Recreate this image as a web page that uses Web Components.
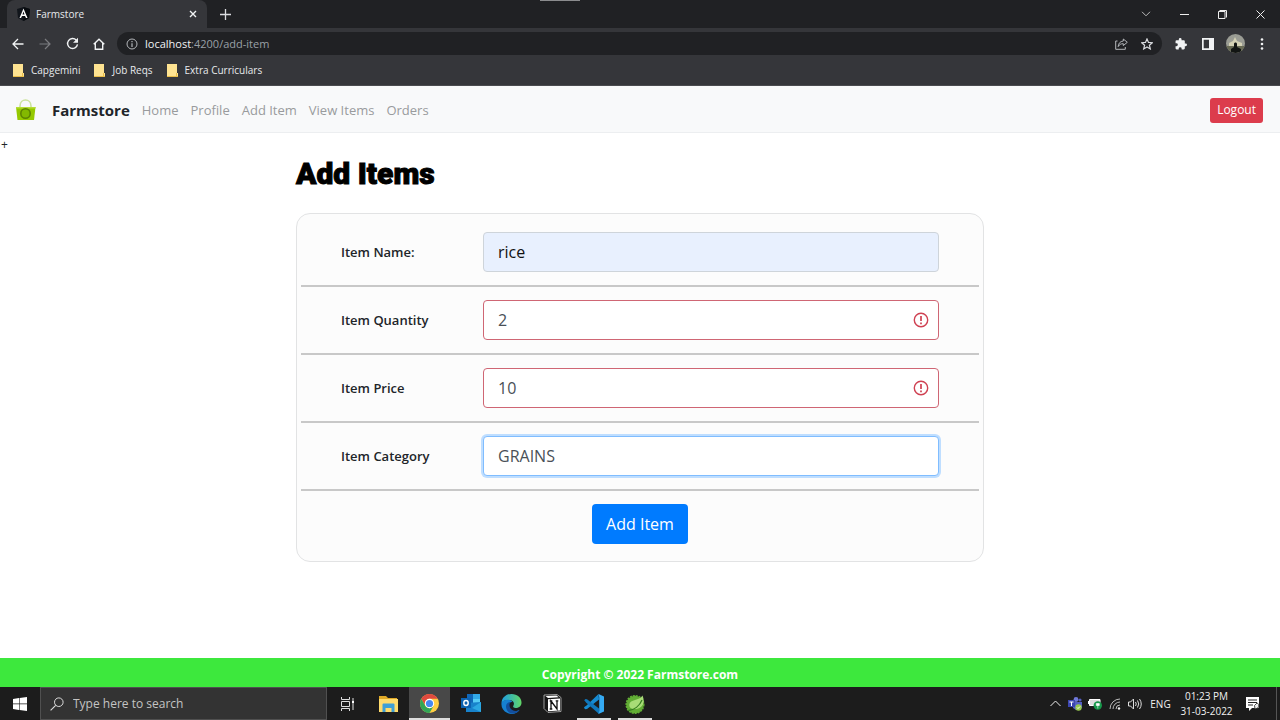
<!DOCTYPE html>
<html lang="en">
<head>
<meta charset="utf-8">
<title>Farmstore</title>
<style>
  html { height: 100%; }
  body { margin: 0; min-height: 100%; display: flex; flex-direction: column; background: #fff; color: #212529; font: 13px/20px "Open Sans", "Noto Sans", sans-serif; }
  store-page { flex: 1; }
</style>
</head>
<body>
<browser-chrome>
  <browser-tab slot="tab">Farmstore</browser-tab>
  <bookmark-link>Capgemini</bookmark-link>
  <bookmark-link>Job Reqs</bookmark-link>
  <bookmark-link>Extra Curriculars</bookmark-link>
</browser-chrome>
<store-page>
  <store-navbar slot="header"></store-navbar>
  <item-form>
    <form-row label="Item Name:" value="rice" state="filled"></form-row>
    <form-row label="Item Quantity" value="2" state="invalid"></form-row>
    <form-row label="Item Price" value="10" state="invalid"></form-row>
    <form-row label="Item Category" value="GRAINS" state="focused"></form-row>
  </item-form>
  <store-footer slot="footer">Copyright © 2022 Farmstore.com</store-footer>
</store-page>
<task-bar></task-bar>

<script>
const base = `
  :host, *, *::before, *::after { box-sizing: border-box; }
  button { font: inherit; color: inherit; background: none; border: 0; margin: 0; padding: 0; display: grid; place-items: center; }
  svg { display: block; }
  a { color: inherit; text-decoration: none; }
`;
function define(name, html, setup) {
  const template = document.createElement('template');
  template.innerHTML = html;
  customElements.define(name, class extends HTMLElement {
    constructor() {
      super();
      this.attachShadow({ mode: 'open' }).append(template.content.cloneNode(true));
    }
    connectedCallback() { if (setup) setup(this, this.shadowRoot); }
  });
}

define('browser-tab', `<style>${base}
  :host { display: flex; align-items: center; width: 200px; height: 28px; padding: 0 7px 0 10px; border-radius: 8px 8px 0 0; background: #35363a; color: #e8eaed; font-size: 10px; }
  span { flex: 1; padding-left: 6px; }
  button { width: 14px; height: 14px; }
</style>
<svg width="13" height="14" viewBox="0 0 26 28"><path fill="#11151b" d="M13 0 26 4 24 22 13 28 2 22 0 4z"/><path fill="#080b0f" d="M13 0 26 4 24 22 13 28z"/><path fill="#fff" fill-rule="evenodd" d="M13 3 21 22h-3l-2-4h-6l-2 4H5zm0 6-2 6h4z"/></svg>
<span><slot></slot></span>
<button aria-label="Close tab"><svg width="8" height="8" viewBox="0 0 8 8"><path d="m1 1 6 6m0-6L1 7" stroke="#f1f3f4" stroke-width="1.4"/></svg></button>`);

define('bookmark-link', `<style>${base}
  :host { display: block; }
  a { display: flex; align-items: center; gap: 7px; }
</style>
<a href="#"><svg width="11" height="13" viewBox="0 0 11 13"><path fill="#fee391" d="M0 0h10v9h1v4H0z"/><path fill="#e9bd49" d="M0 12h11v1H0zM9 9h1v4H9z"/></svg><slot></slot></a>`);

define('browser-chrome', `<style>${base}
  :host { display: block; background: #35363a; color: #e8eaed; font-size: 10px; border-bottom: 1px solid #4a4b4f; }
  .tabs { position: relative; display: flex; align-items: center; height: 28px; padding: 0 1px 0 7px; background: #202124; }
  .tabs::before { content: ""; position: absolute; top: 0; left: 50%; width: 40px; height: 1px; margin-left: -100px; background: #8b8c8e; }
  .tabs .new { width: 36px; height: 28px; }
  .window { display: flex; margin-left: auto; }
  .window button { width: 38px; height: 28px; }
  .toolbar { display: flex; align-items: center; gap: 1px; height: 31px; padding: 0 5px; }
  .toolbar button { width: 26px; height: 26px; }
  .omnibox { display: flex; align-items: center; flex: 1; height: 23px; margin: 0 5px 0 4px; padding: 0 2px 0 9px; border-radius: 12px; background: #202124; }
  .url { flex: 1; padding-left: 7px; color: #9aa0a6; font-size: 11px; outline: none; }
  .url b { font-weight: 400; color: #f1f3f4; }
  .bookmarks { display: flex; align-items: center; gap: 14px; height: 26px; padding: 0 13px 4px; }
</style>
<div class="tabs"><slot name="tab"></slot>
  <button class="new" aria-label="New tab"><svg width="11" height="11" viewBox="0 0 11 11"><path d="M5.5 0v11M0 5.5h11" stroke="#dadce0" stroke-width="1.3"/></svg></button>
  <div class="window">
    <button aria-label="Search tabs"><svg width="10" height="6" viewBox="0 0 10 6"><path d="m1 .8 4 4 4-4" fill="none" stroke="#bbb"/></svg></button>
    <button aria-label="Minimize"><svg width="9" height="9" viewBox="0 0 9 9"><path d="M0 4.5h9" stroke="#eee"/></svg></button>
    <button aria-label="Restore"><svg width="9" height="9" viewBox="0 0 9 9"><path d="M.5 1.500h6.500v7H.5zM1.500.500h7v7" fill="none" stroke="#eee"/></svg></button>
    <button aria-label="Close"><svg width="9" height="9" viewBox="0 0 9 9"><path d="m.5.5 8 8m0-8-8 8" stroke="#eee"/></svg></button>
  </div>
</div>
<div class="toolbar">
  <button aria-label="Back"><svg width="12" height="12" viewBox="0 0 12 12"><path d="M11.500 6H1m5-5L1 6l5 5" fill="none" stroke="#f1f3f4" stroke-width="1.300"/></svg></button>
  <button aria-label="Forward"><svg width="12" height="12" viewBox="0 0 12 12"><path d="M.500 6H11M6 1l5 5-5 5" fill="none" stroke="#7b7d80" stroke-width="1.200"/></svg></button>
  <button aria-label="Reload"><svg width="13" height="13" viewBox="0 0 13 13"><path d="M10.300 3.200a5 5 0 1 0 1.200 4.200" fill="none" stroke="#f1f3f4" stroke-width="1.400"/><path d="M12 .8v5H7z" fill="#f1f3f4"/></svg></button>
  <button aria-label="Home"><svg width="12" height="12" viewBox="0 0 12 12"><path d="M.7 6.200 6 1.200l5.300 5M2.300 5v6.200h7.400V5" fill="none" stroke="#f1f3f4" stroke-width="1.400"/></svg></button>
  <div class="omnibox">
    <svg width="12" height="12" viewBox="0 0 12 12"><circle cx="6" cy="6" r="5" fill="none" stroke="#b4b7bb"/><path d="M6 5.300V9M6 3v1.200" stroke="#b4b7bb" stroke-width="1.200"/></svg>
    <div class="url" role="textbox" aria-label="Address" contenteditable="true"><b>localhost</b>:4200/add-item</div>
    <button aria-label="Share"><svg width="13" height="12" viewBox="0 0 13 12"><path d="M2.500 3H.7v8.300h9.600V9M8.300 1l4 3.300-4 3.300V5.700C6 5.600 4.300 6.500 3.200 8.600c.2-3.200 1.900-5.300 5.100-5.600z" fill="none" stroke="#b4b7bb"/></svg></button>
    <button aria-label="Bookmark this page"><svg width="12" height="12" viewBox="0 0 12 12"><path d="m6 .9 1.500 3.500 3.800.3-2.900 2.500.9 3.700L6 8.900l-3.300 2 .9-3.700L.7 4.700l3.800-.3z" fill="none" stroke="#dadce0" stroke-width="1.200"/></svg></button>
  </div>
  <button aria-label="Extensions"><svg width="12" height="12" viewBox="1 1 22 22"><path fill="#f1f3f4" d="M20.500 11H19V7a2 2 0 0 0-2-2h-4V3.500a2.500 2.500 0 0 0-5 0V5H4a2 2 0 0 0-2 2v3.800h1.500a2.700 2.700 0 0 1 0 5.400H2V20a2 2 0 0 0 2 2h3.800v-1.500a2.700 2.700 0 0 1 5.400 0V22H17a2 2 0 0 0 2-2v-4h1.500a2.500 2.500 0 0 0 0-5z"/></svg></button>
  <button aria-label="Side panel"><svg width="12" height="12" viewBox="0 0 12 12"><path fill="#f1f3f4" fill-rule="evenodd" d="M0 0h12v12H0zm1.700 1.700v8.600H7V1.700z"/></svg></button>
  <button aria-label="Profile"><svg width="19" height="19" viewBox="0 0 19 19"><clipPath id="c"><circle cx="9.500" cy="9.500" r="9.500"/></clipPath><g clip-path="url(#c)"><path fill="#9a9c94" d="M0 0h19v19H0z"/><path fill="#d3d0b4" d="M3 9 7 7l2-4 2 4 5 2v3H3z"/><path fill="#686a55" d="M0 12h19v7H0z"/><path fill="#121513" d="M5 19v-4l3-2v-3c0-2 3-2 3 0v3l4 2v4z"/></g></svg></button>
  <button aria-label="Menu"><svg width="4" height="12" viewBox="0 0 4 12"><g fill="#f1f3f4"><circle cx="2" cy="1.500" r="1.300"/><circle cx="2" cy="6" r="1.300"/><circle cx="2" cy="10.500" r="1.300"/></g></svg></button>
</div>
<div class="bookmarks"><slot></slot></div>`);

define('store-page', `<style>${base}
  :host { display: flex; flex-direction: column; }
  main { flex: 1; }
</style><slot name="header"></slot><main><slot></slot></main><slot name="footer"></slot>`);

define('store-navbar', `<style>${base}
  :host { display: block; background: #f8f9fa; border-bottom: 1px solid #eceef0; }
  nav { display: flex; align-items: center; gap: 12px; height: 46px; padding: 2px 17px 0 15px; color: #999b9d; }
  .brand { display: flex; align-items: center; gap: 16px; color: #212529; font-size: 15px; font-weight: 700; }
  .logout { height: 25px; margin-left: auto; padding: 0 7px; border-radius: 3px; background: #dc3c4c; color: #fff; font-size: 12px; }
</style>
<nav>
  <a class="brand" href="#"><svg width="21" height="22" viewBox="0 0 21 22"><path d="M5 9V7c0-8 11-8 11 0v2" fill="none" stroke="#cbe39c" stroke-width="1.600"/><path fill="#95c900" d="M1 8h19.500L19 21H2.500z"/><path fill="#b6dd35" d="M1 8h19.500v1.500H1z"/><circle cx="10.500" cy="14.500" r="4.700" fill="#83b900" stroke="#5d8500" stroke-width="1.600"/></svg>Farmstore</a>
  <a href="#">Home</a><a href="#">Profile</a><a href="#">Add Item</a><a href="#">View Items</a><a href="#">Orders</a>
  <button class="logout">Logout</button>
</nav>`);

define('item-form', `<style>${base}
  :host { display: block; }
  .mark { padding: 3px 0 0 1px; font-size: 12px; line-height: 18px; }
  .content { max-width: 720px; margin: 0 auto; padding: 0 16px 24px; }
  h1 { margin: 0; height: 59px; color: #000; font: 900 30px/40px Impact, Roboto, sans-serif; -webkit-text-stroke: 1px #000; }
  form { padding: 5px 4px 17px; border: 1px solid #e2e3e4; border-radius: 14px; background: #fcfcfc; }
  .submit { height: 40px; margin: 13px auto 0; padding: 0 14px; border-radius: 4px; background: #007bff; color: #fff; font-size: 16px; }
</style>
<div class="mark">+</div>
<div class="content"><h1>Add Items</h1>
<form><slot></slot><button class="submit" type="button">Add Item</button></form></div>`);

define('form-row', `<style>${base}
  :host { display: block; padding: 13px 40px; border-bottom: 2px solid #c8c8c8; }
  .row { display: grid; grid-template-columns: 142px 1fr; align-items: center; }
  label { font-weight: 600; font-size: 13px; }
  .field { position: relative; }
  input { display: block; width: 100%; height: 40px; padding: 0 14px; border: 1px solid #ced4da; border-radius: 4px; background: #fff; color: #495057; font: inherit; font-size: 16px; outline: none; }
  svg { display: none; position: absolute; right: 10px; top: 12px; }
  :host([state="filled"]) input { background: #e8f0fe; color: #111; }
  :host([state="invalid"]) input { border-color: #cf6674; }
  :host([state="invalid"]) svg { display: block; }
  :host([state="focused"]) input { border-color: #80bdff; box-shadow: 0 0 0 2px #bfdeff; }
</style>
<div class="row"><label for="field"></label><div class="field"><input id="field" type="text">
<svg width="16" height="16" viewBox="0 0 16 16"><circle cx="8" cy="8" r="6.700" fill="none" stroke="#cf4152" stroke-width="1.400"/><path d="M8 4v5M8 10.500v1.700" stroke="#cf4152" stroke-width="1.700"/></svg></div></div>`,
(host, root) => {
  root.querySelector('label').textContent = host.getAttribute('label');
  root.querySelector('input').value = host.getAttribute('value');
});

define('store-footer', `<style>
  :host { display: block; padding: 7px 0 2px; background: #3de83d; color: #fff; font-size: 12px; line-height: 20px; font-weight: 700; text-align: center; }
</style><slot></slot>`);

define('task-bar', `<style>${base}
  :host { display: flex; align-items: stretch; height: 33px; padding-right: 3px; background: #1c1c1c; color: #f0f0f0; font-size: 10px; }
  .start { width: 40px; }
  .search { display: flex; align-items: center; gap: 9px; width: 287px; padding-left: 9px; border: 1px solid #505050; background: #333; }
  input { flex: 1; min-width: 0; border: 0; padding: 0; background: none; color: #fff; font: inherit; font-size: 12px; outline: none; }
  input::placeholder { color: #c4c4c4; opacity: 1; }
  .apps { display: flex; flex: 1; }
  .apps button { width: 41px; }
  .apps .running { background: linear-gradient(#ddd, #ddd) bottom / 34px 2px no-repeat; }
  .apps .active { background-size: 100% 2px; background-color: #484848; }
  .tray { display: flex; align-items: center; border-right: 1px solid #555; }
  .tray button { width: 20px; height: 33px; }
  .tray .lang { width: 31px; }
  .clock { width: 61px; text-align: center; line-height: 15px; }
  .tray .notes { width: 33px; margin-right: 6px; }
</style>
<button class="start" aria-label="Start"><svg width="14" height="14" viewBox="0 0 14 14"><path fill="#fff" d="M0 2 6 1v5.600H0zM6.600.9 14 0v6.600H6.600zM0 7.300h6V13l-6-1zM6.600 7.300H14V14l-7.400-1z"/></svg></button>
<div class="search"><svg width="14" height="14" viewBox="0 0 14 14"><circle cx="8.800" cy="5.200" r="4.300" fill="none" stroke="#ddd"/><path d="M5.700 8.300.6 13.400" stroke="#ddd" stroke-width="1.100"/></svg><input type="text" aria-label="Type here to search" placeholder="Type here to search"></div>
<div class="apps">
  <button aria-label="Task view"><svg width="15" height="14" viewBox="0 0 15 14"><path d="M1.500 0v2.500h8V0M1.500 14v-2.500h8V14M1.500 4.500h8v5h-8zM13 1v12" fill="none" stroke="#ddd"/><path fill="#fff" d="M12 4h2v2h-2z"/></svg></button>
  <button aria-label="File Explorer"><svg width="19" height="17" viewBox="0 0 19 17"><path fill="#dfa927" d="M0 1h7l2 2h9v3H0z"/><path fill="#ffdb6c" d="M0 4h19v13H0z"/><path fill="#3f9fd5" d="M3.500 16V9.500q0-1 1-1h10q1 0 1 1V17h-3v-4H6.500v4h-3z"/></svg></button>
  <button class="running active" aria-label="Chrome"><svg width="19" height="19" viewBox="0 0 20 20"><circle cx="10" cy="10" r="10" fill="#ffce44"/><path fill="#e04a3f" d="M1.340 5A10 10 0 0 1 18.660 5H10a5 5 0 0 0-4.330 7.500z"/><path fill="#32a557" d="M1.340 5A10 10 0 0 0 10 20l4.330-7.500a5 5 0 0 1-8.660 0z"/><circle cx="10" cy="10" r="4.900" fill="#fff"/><circle cx="10" cy="10" r="3.800" fill="#4688f1"/></svg></button>
  <button aria-label="Outlook"><svg width="20" height="19" viewBox="0 0 20 19"><path fill="#1067b8" d="M6 0h13v9H6z"/><path fill="#32a9e7" d="M12 0h7v5h-7z"/><path fill="#55cbf4" d="M12 5h7v5h-7z"/><path fill="#1882cb" d="M5 9l15-1v10H5z"/><path fill="#2ba7e2" d="m20 8-9 6 9 4z"/><path fill="#0c62b1" d="M0 4h10v10H0z"/><ellipse cx="5" cy="9" rx="2.200" ry="2.500" fill="none" stroke="#fff" stroke-width="1.400"/></svg></button>
  <button aria-label="Edge"><svg width="21" height="20" viewBox="0 0 21 20"><defs><linearGradient id="e"><stop stop-color="#1d9de3"/><stop offset="1" stop-color="#62d766"/></linearGradient></defs><path fill="url(#e)" d="M.5 9C1 3 5.500 0 10.500 0c6 0 10 4 10 8.500 0 4-3 5.500-6 5.500-2 0-3-1-2-2.500 1.500-3-1-5.500-5-5.500C4 6 2 7 .5 9z"/><path fill="#1680d1" d="M.5 9c2-3.500 8-4.500 11-1-3-.5-5 2-4 5 1 3 5 6 11 3-3 4-8 5-12 3C2 17 0 13 .5 9z"/><path fill="#134e9d" d="M10 8c-4 0-6 3-4.500 7s5 5 7 4.500c3-.5 5-2 6-3.500-4 2-8 .5-9.500-2.500C8 11 8.500 9 10 8z"/></svg></button>
  <button aria-label="Notion"><svg width="19" height="19" viewBox="0 0 19 19"><path fill="#161616" stroke="#bbb" stroke-width=".8" d="M1 1 14 .5l4 3v14L5 18.500l-4-4z"/><path fill="#fff" d="m2.500 2 11-.6 2.200 1.800L5 4zM5 5.200l12-.7v12L5 17.300z"/><path d="M8 15V7l6 8V6.500M6.700 7h2.600M6.700 15h2.600M12.700 6.800h2.600" fill="none" stroke="#111" stroke-width="1.300"/></svg></button>
  <button class="running" aria-label="Visual Studio Code"><svg width="20" height="20" viewBox="0 0 20 20"><path fill="#168bd2" d="m14.500 0-12 11.500L.3 13l-.3 1 1.300 1.300L3 15 15 5.500z"/><path fill="#1077bb" d="M.2 6.300 1.500 5 3 5.300 15 14.500V20L2 8.500z"/><path fill="#35aaf2" d="m14.500 0 5.500 2.500v15L14.500 20l.7-3V3z"/></svg></button>
  <button class="running" aria-label="Spring Tools"><svg width="20" height="20" viewBox="0 0 20 20"><circle cx="10" cy="10.500" r="8.800" fill="#62ae35" stroke="#62ae35" stroke-width="1.500" stroke-dasharray="2 1"/><path fill="#a8dc77" d="M17.500 1.500c3.500 8-1 14-9 13.500-3-.3-4.500-2-4.200-4.500C5 5 14.500 7 17.500 1.500z"/><path d="M3.500 16.500C9 16 14.500 12 17 6" fill="none" stroke="#367d21" stroke-width="1.300"/></svg></button>
</div>
<div class="tray">
  <button aria-label="Show hidden icons"><svg width="11" height="7" viewBox="0 0 11 7"><path d="m.5 6 5-5 5 5" fill="none" stroke="#eee"/></svg></button>
  <button aria-label="Teams"><svg width="14" height="14" viewBox="0 0 14 14"><circle cx="8" cy="2.500" r="2.400" fill="#6f78d8"/><circle cx="12" cy="3" r="1.600" fill="#555fc4"/><path fill="#555fc4" d="M5 5h9v6l-6 2-3-2z"/><path fill="#3c46b0" d="M0 3h7v7H0z"/><path d="M1.500 5h4M3.500 5v4" stroke="#fff"/><circle cx="10.500" cy="10.500" r="3.200" fill="#98c94f"/><path d="m9 10.500 1 1 2-2" fill="none" stroke="#fff"/></svg></button>
  <button aria-label="Battery"><svg width="14" height="12" viewBox="0 0 14 12"><path d="M1.500 1.500H12v6H1.500z" fill="#ddd" stroke="#fff"/><path fill="#fff" d="M0 3h1v3H0z"/><circle cx="9.800" cy="7.500" r="4.200" fill="#16984a"/><path d="M9.800 10.500V7M8.300 5.500h3v2h-3z" fill="#fff" stroke="#fff" stroke-width=".6"/></svg></button>
  <button aria-label="Network"><svg width="12" height="12" viewBox="0 0 12 12"><g fill="none" stroke="#bbb"><path d="M1 11A10 10 0 0 1 11 1M4 11a7 7 0 0 1 7-7M7 11a4 4 0 0 1 4-4"/></g><circle cx="10" cy="10.500" r="1.200" fill="#eee"/></svg></button>
  <button aria-label="Volume"><svg width="14" height="12" viewBox="0 0 14 12"><path d="M.5 4h2L5.500 1v10l-3-3h-2zM7.500 4q1.500 2 0 4M9.500 2.500q2.500 3.500 0 7M11.500 1q3.500 5 0 10" fill="none" stroke="#ddd"/></svg></button>
  <button class="lang">ENG</button>
  <div class="clock">01:23 PM<br>31-03-2022</div>
  <button class="notes" aria-label="Notifications"><svg width="15" height="14" viewBox="0 0 15 14"><path fill="#fff" d="M0 0h13v11H6l-3 3v-3H0z"/><path d="M2 3h9M2 5.500h9M2 8h5" stroke="#222"/><path d="M11 6q3 1 1 5l-3 1q-2-4 2-6z" fill="#eee" stroke="#222" stroke-width=".8"/></svg></button>
</div>`);
</script>
</body>
</html>
